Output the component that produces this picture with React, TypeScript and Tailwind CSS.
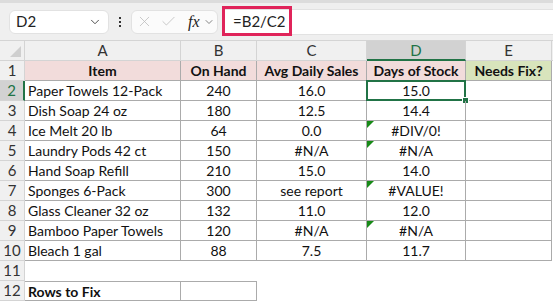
import React from 'react';
import { ChevronDown, X, Check } from 'lucide-react';

type Row = {
  item: string;
  onHand: string;
  avg: string;
  days: string;
  flag?: boolean;
};

const rows: Row[] = [
  { item: 'Paper Towels 12-Pack', onHand: '240', avg: '16.0', days: '15.0' },
  { item: 'Dish Soap 24 oz', onHand: '180', avg: '12.5', days: '14.4' },
  { item: 'Ice Melt 20 lb', onHand: '64', avg: '0.0', days: '#DIV/0!', flag: true },
  { item: 'Laundry Pods 42 ct', onHand: '150', avg: '#N/A', days: '#N/A', flag: true },
  { item: 'Hand Soap Refill', onHand: '210', avg: '15.0', days: '14.0' },
  { item: 'Sponges 6-Pack', onHand: '300', avg: 'see report', days: '#VALUE!', flag: true },
  { item: 'Glass Cleaner 32 oz', onHand: '132', avg: '11.0', days: '12.0' },
  { item: 'Bamboo Paper Towels', onHand: '120', avg: '#N/A', days: '#N/A', flag: true },
  { item: 'Bleach 1 gal', onHand: '88', avg: '7.5', days: '11.7' },
];

const cellFont = { fontFamily: 'Lato, "Open Sans", sans-serif' };

const RowHead = ({ n, active }: { n: number; active?: boolean }) => (
  <div
    className={
      active
        ? 'flex h-5 items-center justify-center border-b border-r-2 border-b-[#d4d4d4] border-r-[#217346] bg-[#d2d2d2] text-[15px] text-[#217346]'
        : 'flex h-5 items-center justify-center border-b border-r border-[#d4d4d4] bg-[#f0f0f0] text-[15px] text-[#333]'
    }
  >
    {n}
  </div>
);

const ErrTri = () => (
  <div className="absolute left-0 top-0 h-0 w-0 border-r-[7px] border-t-[7px] border-r-transparent border-t-[#178a17]" />
);

export default function App() {
  return (
    <div className="h-[302px] w-[553px] overflow-hidden bg-white text-[#111]" style={cellFont}>
      {/* Toolbar */}
      <div className="border-t-[3px] border-[#dcdcdc] bg-[#efefef]">
        <div className="flex h-[37px] items-center pl-[9px]">
          <div className="flex h-6 w-[100px] items-center justify-between rounded-md border border-[#e2e2e2] bg-white pl-[6px] pr-[6px] text-[15px]">
            <span className="text-[#222]">D2</span>
            <ChevronDown size={14} strokeWidth={1.6} className="text-[#444]" />
          </div>
          <div className="flex w-[22px] flex-col items-center gap-[2px]">
            <span className="h-[2px] w-[2px] bg-[#333]" />
            <span className="h-[2px] w-[2px] bg-[#333]" />
            <span className="h-[2px] w-[2px] bg-[#333]" />
          </div>
          <div className="flex h-6 w-[87px] items-center gap-[3px] rounded-md border border-[#e2e2e2] bg-[#fbfbfb] pl-[4px]">
            <X size={17} strokeWidth={1.1} className="text-[#bcbcbc]" />
            <Check size={17} strokeWidth={1.1} className="ml-1 text-[#bcbcbc]" />
            <span
              className="ml-[8px] text-[16px] italic text-[#222]"
              style={{ fontFamily: '"Liberation Serif", serif' }}
            >
              fx
            </span>
            <ChevronDown size={12} strokeWidth={1.6} className="text-[#666]" />
          </div>
          <div className="relative ml-1 flex h-[26px] flex-1 items-center border border-r-0 border-[#e2e2e2] bg-white pl-[10px] text-[15px] text-[#222]">
            =B2/C2
            <div className="absolute -top-[4px] left-[-1px] h-[30px] w-[70px] border-[3px] border-[#e0245a]" />
          </div>
        </div>
      </div>

      {/* Grid */}
      <div className="grid grid-cols-[25px_156px_76px_110px_99px_86px_1fr] border-t border-[#d4d4d4] text-[14px]">
        {/* column headers */}
        <div className="relative h-5 border-b border-r border-[#d4d4d4] bg-[#f0f0f0]">
          <div className="absolute bottom-[3px] right-[3px] h-0 w-0 border-b-[11px] border-l-[11px] border-b-[#cfcfcf] border-l-transparent" />
        </div>
        {['A', 'B', 'C'].map((c) => (
          <div key={c} className="flex h-5 items-center justify-center border-b border-r border-[#d4d4d4] bg-[#f0f0f0] text-[15px] text-[#333]">
            {c}
          </div>
        ))}
        <div className="flex h-5 items-center justify-center border-b-2 border-r border-b-[#217346] border-r-[#d4d4d4] bg-[#d2d2d2] text-[15px] text-[#217346]">
          D
        </div>
        <div className="flex h-5 items-center justify-center border-b border-r border-[#d4d4d4] bg-[#f0f0f0] text-[15px] text-[#333]">
          E
        </div>
        <div className="h-5 border-b border-[#d4d4d4] bg-[#f0f0f0]" />

        {/* row 1 */}
        <RowHead n={1} />
        <div className="flex h-5 items-center justify-center border-b border-r border-[#ababab] bg-[#f2dcdb] font-bold">Item</div>
        <div className="flex h-5 items-center justify-center border-b border-r border-[#ababab] bg-[#f2dcdb] font-bold">On Hand</div>
        <div className="flex h-5 items-center justify-center border-b border-r border-[#ababab] bg-[#f2dcdb] font-bold">Avg Daily Sales</div>
        <div className="flex h-5 items-center justify-center border-b border-r border-[#ababab] bg-[#f2dcdb] font-bold">Days of Stock</div>
        <div className="flex h-5 items-center justify-center border-b border-r border-[#ababab] bg-[#d8e4bc] font-bold">Needs Fix?</div>
        <div className="h-5" />

        {rows.map((r, i) => {
          const n = i + 2;
          const sel = n === 2;
          return (
            <React.Fragment key={n}>
              <RowHead n={n} active={sel} />
              <div className="flex h-5 items-center truncate border-b border-r border-[#ababab] pl-[3px]">{r.item}</div>
              <div className="flex h-5 items-center justify-center border-b border-r border-[#ababab]">{r.onHand}</div>
              <div className="flex h-5 items-center justify-center whitespace-nowrap border-b border-r border-[#ababab]">{r.avg}</div>
              <div className="relative flex h-5 items-center justify-center border-b border-r border-[#ababab]">
                {r.flag && <ErrTri />}
                {r.days}
                {sel && (
                  <>
                    <div className="absolute -left-[1px] -top-[1px] h-[21px] w-[100px] border-2 border-[#217346]" />
                    <div className="absolute -bottom-[4px] -right-[4px] h-[7px] w-[7px] border border-white bg-[#217346]" />
                  </>
                )}
              </div>
              <div className="h-5 border-b border-r border-[#ababab]" />
              <div className="h-5" />
            </React.Fragment>
          );
        })}

        {/* row 11 */}
        <RowHead n={11} />
        <div className="col-span-6 h-5" />

        {/* row 12 */}
        <RowHead n={12} />
        <div className="flex h-5 items-center border-b border-r border-t border-[#ababab] pl-[3px] font-bold">Rows to Fix</div>
        <div className="h-5 border-b border-r border-t border-[#ababab]" />
        <div className="col-span-4 h-5" />
      </div>
    </div>
  );
}
